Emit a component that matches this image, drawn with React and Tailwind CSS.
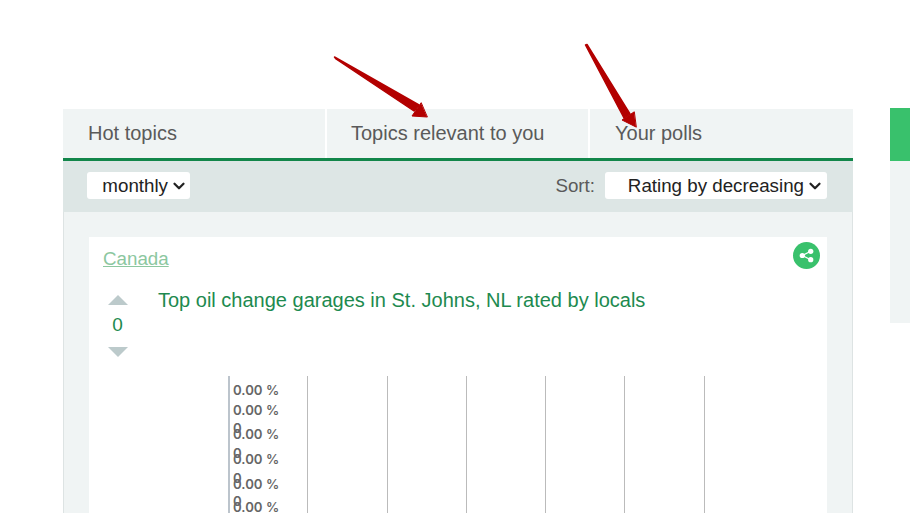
import React from "react";
import { ChevronDown } from "lucide-react";

const rows = [390, 410, 434, 459, 484, 507];

function FakeSelect({ label, className }) {
    return (
        <div className={`flex items-center justify-end h-[27px] bg-white rounded-[3px] text-[18.75px] text-[#222] ${className}`}>
            <span className="pt-px">{label}</span>
            <ChevronDown size={18} strokeWidth={3} className="ml-[2px] mr-[2px] text-[#222]" />
        </div>
    );
}

function Chart() {
    return (
        <div className="relative ml-[125px] mt-[19px] w-[477px] h-[140px] flex font-['Inter'] font-semibold text-[13.2px] text-[#666]">
            {[0, 1, 2, 3, 4, 5].map((i) => (
                <div key={i} className={`w-[79.3px] h-full border-l shrink-0 ${i === 0 ? "border-l-2 border-[#bcc4cc]" : "border-[#bbb]"}`} />
            ))}
            <div className="absolute left-[476px] top-0 h-full border-l border-[#bbb]" />
            {rows.map((y, i) => (
                <React.Fragment key={y}>
                    <span className="absolute left-[5px] leading-none whitespace-nowrap" style={{ top: y - 382 }}>0.00 %</span>
                    {i > 1 && <span className="absolute left-[5px] leading-none" style={{ top: y - 388 }}>0</span>}
                </React.Fragment>
            ))}
        </div>
    );
}

export default function App() {
    return (
        <div className="relative h-[513px] w-[910px] overflow-hidden bg-white font-['Liberation_Sans',sans-serif]">
            <div className="flex items-start pt-[108px] pl-[63px]">
                <div className="w-[790px] mt-[1px]">
                    <div className="flex h-[52px] bg-[#f0f4f4] border-b-[3px] border-[#12864a] text-[20px] text-[#5a5a5a]">
                        <div className="h-[49px] w-[262px] pt-[9px] pl-[25px]">Hot topics</div>
                        <div className="h-[49px] w-[263px] pt-[9px] pl-[24px] border-l-2 border-white">Topics relevant to you</div>
                        <div className="h-[49px] w-[265px] pt-[9px] pl-[25px] border-l-2 border-white">Your polls</div>
                    </div>
                    <div className="flex items-center justify-between h-[51px] bg-[#dde6e5] pl-[24px] pr-[26px] pb-[2px]">
                        <FakeSelect label="monthly" className="w-[103px]" />
                        <div className="flex items-center">
                            <span className="pt-px text-[18.75px] text-[#5a5a5a] mr-[10px]">Sort:</span>
                            <FakeSelect label="Rating by decreasing" className="w-[222px] pr-px" />
                        </div>
                    </div>
                    <div className="bg-[#f0f4f4] border-x border-[#dde3e3] pt-[25px] px-[25px] h-[400px]">
                        <div className="relative bg-white h-[400px] pt-[11px] pl-[14px]">
                            <a className="block text-[18.75px] leading-[22px] text-[#8cc79f] underline">Canada</a>
                            <div className="absolute top-[5px] right-[7px] w-[27px] h-[27px] rounded-full bg-[#39c16c] flex items-center justify-center">
                                <svg width="15" height="15" viewBox="0 0 16 16" fill="#fff">
                                    <circle cx="12.5" cy="3.5" r="2.8" />
                                    <circle cx="3.5" cy="8" r="2.8" />
                                    <circle cx="12.5" cy="12.5" r="2.8" />
                                    <path d="M3.5 8 12.5 3.5M3.5 8l9 4.5" stroke="#fff" strokeWidth="1.4" />
                                </svg>
                            </div>
                            <div className="flex mt-[18px]">
                                <div className="w-[29px] flex flex-col items-center text-[#1d8a4f] text-[19px] pt-[7px]">
                                    <div className="w-0 h-0 border-x-[10.5px] border-x-transparent border-b-[10px] border-b-[#bccacb]" />
                                    <div className="leading-[22px] mt-[9px]">0</div>
                                    <div className="w-0 h-0 mt-[11px] border-x-[10.5px] border-x-transparent border-t-[10px] border-t-[#bccacb]" />
                                </div>
                                <div className="ml-[26px] text-[20px] leading-[24px] text-[#1d8a4f]">Top oil change garages in St. Johns, NL rated by locals</div>
                            </div>
                            <Chart />
                        </div>
                    </div>
                </div>
                <div className="ml-[37px] w-[20px] h-[215px] bg-[#f0f4f4] shrink-0">
                    <div className="h-[53px] bg-[#39c16c]" />
                </div>
            </div>
            <svg className="absolute left-0 top-0 pointer-events-none" width="910" height="513" fill="#b30000" stroke="#b30000" strokeLinejoin="round" strokeLinecap="round">
                <path d="M334.5 57 L336 59 L414 111 L419 105 Z" strokeWidth="1.5" />
                <path d="M427 117 L412 116 L421 103 Z" strokeWidth="1" />
                <path d="M585.5 45 L587 44.5 L630 114 L624 118 Z" strokeWidth="1.5" />
                <path d="M636 127 L622 120 L634 112 Z" strokeWidth="1" />
            </svg>
        </div>
    );
}
